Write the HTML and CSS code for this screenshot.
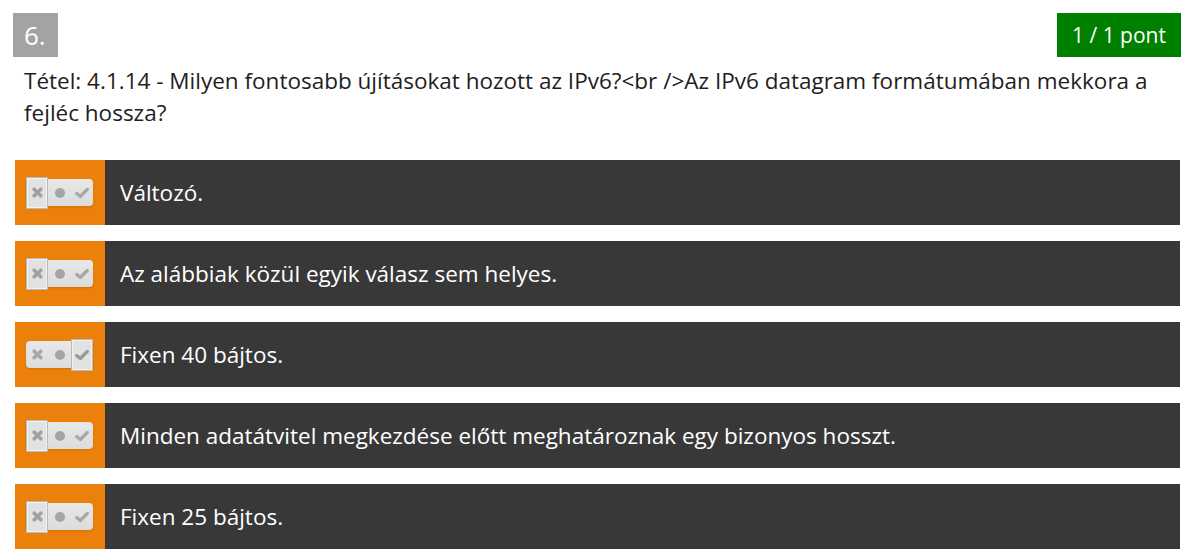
FILE: index.html
```html
<!DOCTYPE html>
<html lang="hu">
<head>
<meta charset="utf-8">
<link rel="stylesheet" href="styles.css">
</head>
<body>
<div class="quiz">
  <div class="head">
    <div class="num">6.</div>
    <div class="points">1 / 1 pont</div>
  </div>
  <div class="question">Tétel: 4.1.14 - Milyen fontosabb újításokat hozott az IPv6?&lt;br /&gt;Az IPv6 datagram formátumában mekkora a fejléc hossza?</div>
  <div class="answers">
    <div class="answer">
      <div class="mark"><div class="toggle">
        <span class="seg seg-x sel"><svg viewBox="0 0 10 10" width="11" height="11"><path d="M2 2 L8 8 M8 2 L2 8" stroke="#a0a0a0" stroke-width="3.2" stroke-linecap="round"/></svg></span>
        <span class="seg seg-mid"><span class="dot"></span></span>
        <span class="seg seg-ok"><svg viewBox="0 0 12 10" width="14" height="12"><path d="M1.5 5.5 L4.5 8 L10.5 2" stroke="#a8a8a8" stroke-width="2.8" fill="none" stroke-linecap="round" stroke-linejoin="round"/></svg></span>
      </div></div>
      <div class="text">Változó.</div>
    </div>
    <div class="answer">
      <div class="mark"><div class="toggle">
        <span class="seg seg-x sel"><svg viewBox="0 0 10 10" width="11" height="11"><path d="M2 2 L8 8 M8 2 L2 8" stroke="#a0a0a0" stroke-width="3.2" stroke-linecap="round"/></svg></span>
        <span class="seg seg-mid"><span class="dot"></span></span>
        <span class="seg seg-ok"><svg viewBox="0 0 12 10" width="14" height="12"><path d="M1.5 5.5 L4.5 8 L10.5 2" stroke="#a8a8a8" stroke-width="2.8" fill="none" stroke-linecap="round" stroke-linejoin="round"/></svg></span>
      </div></div>
      <div class="text">Az alábbiak közül egyik válasz sem helyes.</div>
    </div>
    <div class="answer">
      <div class="mark"><div class="toggle">
        <span class="seg seg-x"><svg viewBox="0 0 10 10" width="11" height="11"><path d="M2 2 L8 8 M8 2 L2 8" stroke="#a8a8a8" stroke-width="3.2" stroke-linecap="round"/></svg></span>
        <span class="seg seg-mid"><span class="dot"></span></span>
        <span class="seg seg-ok sel"><svg viewBox="0 0 12 10" width="14" height="12"><path d="M1.5 5.5 L4.5 8 L10.5 2" stroke="#999999" stroke-width="2.8" fill="none" stroke-linecap="round" stroke-linejoin="round"/></svg></span>
      </div></div>
      <div class="text">Fixen 40 bájtos.</div>
    </div>
    <div class="answer">
      <div class="mark"><div class="toggle">
        <span class="seg seg-x sel"><svg viewBox="0 0 10 10" width="11" height="11"><path d="M2 2 L8 8 M8 2 L2 8" stroke="#a0a0a0" stroke-width="3.2" stroke-linecap="round"/></svg></span>
        <span class="seg seg-mid"><span class="dot"></span></span>
        <span class="seg seg-ok"><svg viewBox="0 0 12 10" width="14" height="12"><path d="M1.5 5.5 L4.5 8 L10.5 2" stroke="#a8a8a8" stroke-width="2.8" fill="none" stroke-linecap="round" stroke-linejoin="round"/></svg></span>
      </div></div>
      <div class="text">Minden adatátvitel megkezdése előtt meghatároznak egy bizonyos hosszt.</div>
    </div>
    <div class="answer">
      <div class="mark"><div class="toggle">
        <span class="seg seg-x sel"><svg viewBox="0 0 10 10" width="11" height="11"><path d="M2 2 L8 8 M8 2 L2 8" stroke="#a0a0a0" stroke-width="3.2" stroke-linecap="round"/></svg></span>
        <span class="seg seg-mid"><span class="dot"></span></span>
        <span class="seg seg-ok"><svg viewBox="0 0 12 10" width="14" height="12"><path d="M1.5 5.5 L4.5 8 L10.5 2" stroke="#a8a8a8" stroke-width="2.8" fill="none" stroke-linecap="round" stroke-linejoin="round"/></svg></span>
      </div></div>
      <div class="text">Fixen 25 bájtos.</div>
    </div>
  </div>
</div>
</body>
</html>
```
FILE: styles.css
```css
html, body {
  margin: 0;
  padding: 0;
  background: #ffffff;
}
body {
  font-family: "Open Sans", "Noto Sans", sans-serif;
  color: #222222;
}
.quiz {
  padding: 13px 12px 0 15px;
}
.head {
  display: flex;
  justify-content: space-between;
  align-items: flex-start;
  margin-left: -2px;
  margin-right: -1px;
}
.num {
  width: 45px;
  height: 44px;
  background: #a3a3a3;
  color: #ffffff;
  font-size: 26px;
  line-height: 44px;
  padding-left: 11px;
  box-sizing: border-box;
}
.points {
  width: 124px;
  height: 44px;
  background: #008000;
  color: #ffffff;
  font-size: 21px;
  line-height: 44px;
  text-align: center;
}
.question {
  margin: 8px 20px 0 9px;
  font-size: 22.5px;
  line-height: 32px;
  color: #1e1e1e;
}
.answers {
  margin-top: 31px;
  display: flex;
  flex-direction: column;
  gap: 16px;
}
.answer {
  display: flex;
  height: 65px;
  background: #383838;
}
.mark {
  width: 90px;
  flex: none;
  background: #eb800a;
  display: flex;
  align-items: center;
  padding-left: 11px;
  box-sizing: border-box;
}
.toggle {
  display: flex;
  align-items: center;
  width: 67px;
  height: 27px;
  background: linear-gradient(#e8e8e8, #dcdcdc);
  border-radius: 4px;
  box-shadow: 0 1px 2px rgba(0,0,0,0.12);
}
.seg {
  width: 22px;
  height: 27px;
  display: flex;
  align-items: center;
  justify-content: center;
  box-sizing: border-box;
}
.seg-mid { width: 23px; }
.seg.sel {
  height: 32px;
  border: 1px solid #b9b9b9;
  box-shadow: inset 0 0 0 1px #f3f3f3;
  background: #e2e2e2;
}
.dot {
  width: 10px;
  height: 10px;
  border-radius: 50%;
  background: #a5a5a5;
}
.text {
  display: flex;
  align-items: center;
  padding-left: 15px;
  color: #ffffff;
  font-size: 22.5px;
}
```
